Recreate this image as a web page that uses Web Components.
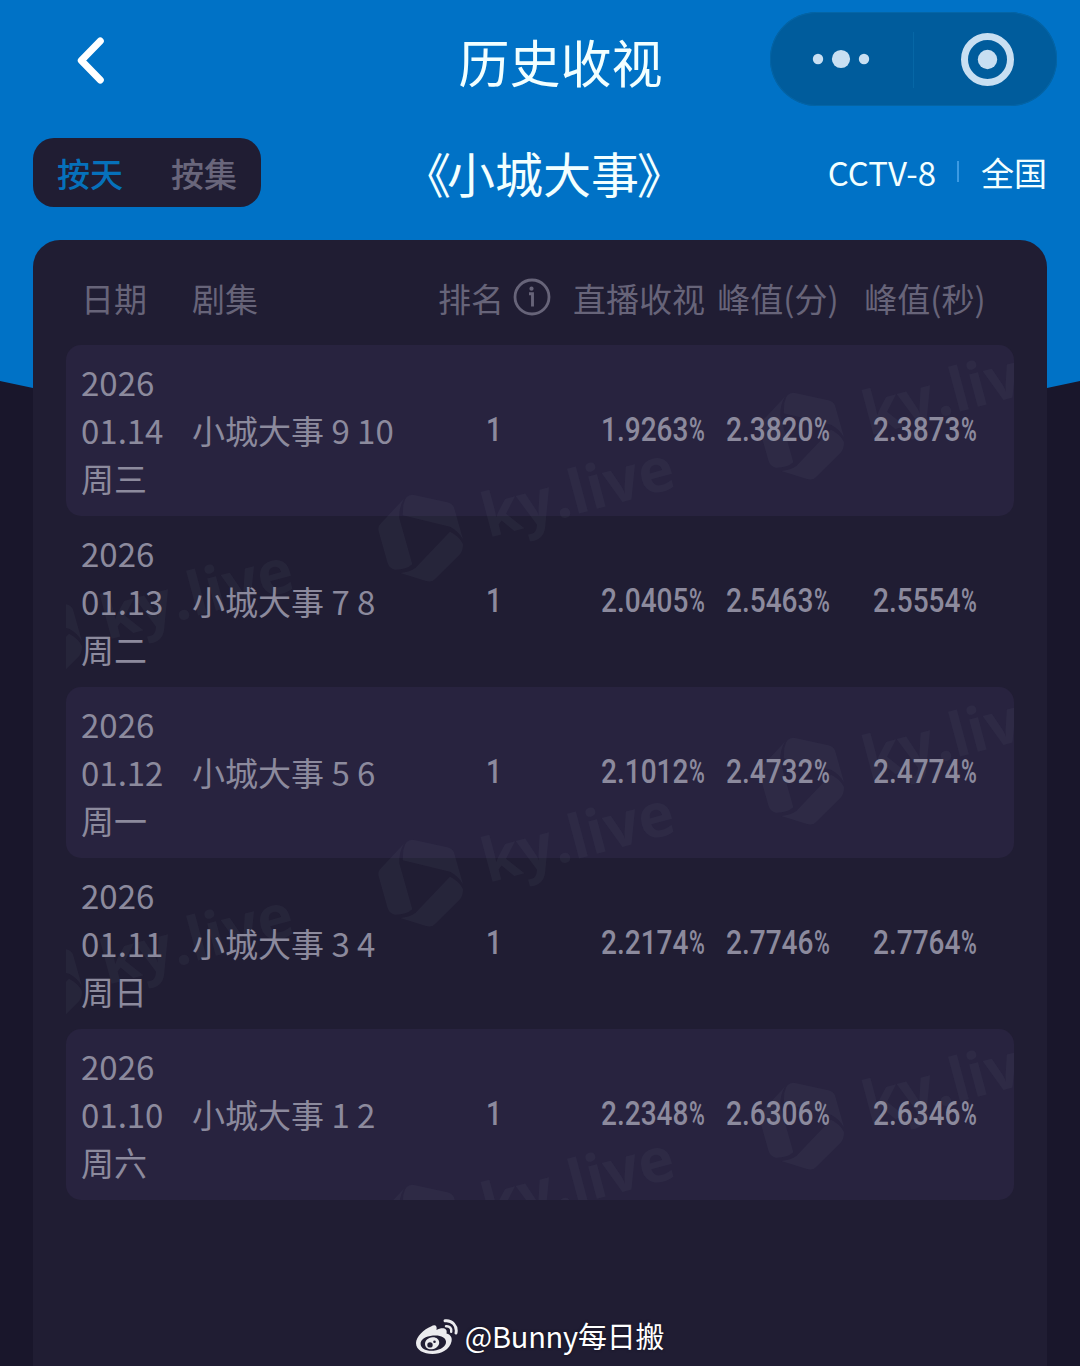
<!DOCTYPE html>
<html lang="zh-CN">
<head>
<meta charset="utf-8">
<title>历史收视</title>
<style>
html,body{margin:0;padding:0}
body{width:1080px;height:1366px;overflow:hidden;background:#19162b;font-family:"Noto Sans CJK SC",sans-serif;font-size:33px}
.open{letter-spacing:-4px}
.close{margin-left:-2px}
</style>
</head>
<body>
<ratings-page>
  <nav-bar slot="nav">历史收视</nav-bar>
  <filter-bar slot="filter" channel="CCTV-8" region="全国"><span class="open">《</span>小城大事<span class="close">》</span></filter-bar>
  <ratings-table>
    <ratings-row year="2026" day="01.14" week="周三" rank="1" live="1.9263" minute="2.3820" second="2.3873">小城大事 9 10</ratings-row>
    <ratings-row year="2026" day="01.13" week="周二" rank="1" live="2.0405" minute="2.5463" second="2.5554">小城大事 7 8</ratings-row>
    <ratings-row year="2026" day="01.12" week="周一" rank="1" live="2.1012" minute="2.4732" second="2.4774">小城大事 5 6</ratings-row>
    <ratings-row year="2026" day="01.11" week="周日" rank="1" live="2.2174" minute="2.7746" second="2.7764">小城大事 3 4</ratings-row>
    <ratings-row year="2026" day="01.10" week="周六" rank="1" live="2.2348" minute="2.6306" second="2.6346">小城大事 1 2</ratings-row>
  </ratings-table>
  <author-credit slot="credit">@Bunny每日搬</author-credit>
</ratings-page>
<script>
const define = (name, render) => customElements.define(name, class extends HTMLElement {
  constructor() {
    super();
    this.attachShadow({ mode: 'open' });
  }
  connectedCallback() {
    this.shadowRoot.innerHTML = render(this);
  }
});

define('ratings-page', () => `
<style>
:host{display:grid;width:1080px;height:1366px;grid-template:1fr / 1fr;background:#19162b}
.blue{grid-area:1/1;height:388px;background:#0072c6;clip-path:polygon(0 0,100% 0,100% 381px,1047px 388px,33px 388px,0 381px)}
.col{grid-area:1/1;display:flex;flex-direction:column;position:relative}
.panel{flex:1;margin:0 33px;background:#201d33;border-radius:27px 27px 0 0;display:flex;flex-direction:column;justify-content:space-between}
</style>
<div class="blue"></div>
<div class="col">
  <slot name="nav"></slot>
  <slot name="filter"></slot>
  <div class="panel"><slot></slot><slot name="credit"></slot></div>
</div>`);

define('nav-bar', () => `
<style>
:host{display:grid;grid-template-columns:1fr auto 1fr;height:120px;box-sizing:border-box;align-items:center;padding:0 23px 2px 64px;color:#f2ffff}
.back{display:block;width:54px;height:60px;margin-top:4px}
.title{font-size:51px;line-height:60px;padding-top:4px}
capsule-menu{justify-self:end}
</style>
<svg class="back" viewBox="64 31 54 60" fill="none" stroke="#fff" stroke-width="7" stroke-linecap="round" stroke-linejoin="round"><path d="M100.3 41 81.3 60.5 100.3 80"/></svg>
<div class="title"><slot></slot></div>
<capsule-menu></capsule-menu>`);

define('capsule-menu', () => `
<style>
:host{display:flex;width:287px;height:94px;border-radius:47px;background:#005c9c;box-shadow:inset 0 0 0 1px #0465a6}
svg{display:block}
</style>
<svg width="287" height="94" viewBox="770 12 287 94">
  <g fill="#c8dff2"><circle cx="818" cy="59" r="5.2"/><circle cx="841" cy="59" r="9.1"/><circle cx="864" cy="59" r="5.2"/><circle cx="987.5" cy="59.5" r="9.7"/></g>
  <path d="M913.5 32V88" stroke="#0667a6"/>
  <circle cx="987.5" cy="59.5" r="23" fill="none" stroke="#c8dff2" stroke-width="7"/>
</svg>`);

define('filter-bar', el => `
<style>
:host{display:grid;grid-template-columns:1fr auto 1fr;height:120px;padding:18px 33px 33px;box-sizing:border-box;color:#f2ffff}
.tabs{display:flex;justify-content:space-between;align-items:center;width:228px;height:69px;box-sizing:border-box;padding:0 24px;border-radius:21px;background:#201d33;font-weight:500;color:#69667b;line-height:48px}
.on{color:#0671bb}
.name{font-size:48px;line-height:69px;padding-left:8px}
.scope{display:flex;justify-content:flex-end;align-items:center;height:67px;line-height:48px}
i{width:2px;height:21px;background:#3b9ae3;margin:0 22px 0 21px}
</style>
<div class="tabs"><span class="on">按天</span><span>按集</span></div>
<div class="name"><slot></slot></div>
<div class="scope"><span>${el.getAttribute('channel')}</span><i></i><span>${el.getAttribute('region')}</span></div>`);

const columns = 'grid-template-columns:111px 246px 112px 155px 146px 148px;padding-left:15px;';

define('ratings-table', () => `
<style>
:host{display:block;position:relative;margin:0 33px}
.head{display:grid;${columns}height:105px;align-items:center;color:#676479;line-height:48px;white-space:nowrap}
.head>*{padding-top:10px}
.rank{display:flex;align-items:center;justify-content:space-between}
.rank svg{width:38px;height:38px;margin:-1px -1px 0 0}
.r{text-align:right}.c{text-align:center}
water-mark{position:absolute;left:0;top:105px}
</style>
<div class="head"><span class="date">日期</span><span>剧集</span>
<span class="rank">排名<svg viewBox="0 0 38 38" fill="none" stroke="#676479"><circle cx="19" cy="19" r="17" stroke-width="2.8"/><circle cx="18.500" cy="10.7" r="2.100" fill="#676479" stroke="none"/><path d="M16 15.700H19.500V28.4" stroke-width="2.9"/></svg></span>
<span class="r">直播收视</span><span class="c">峰值(分)</span><span class="c">峰值(秒)</span></div>
<slot></slot>
<water-mark></water-mark>`);

define('ratings-row', el => {
  const a = n => el.getAttribute(n);
  return `
<style>
:host{display:grid;${columns}height:171px;align-items:center;border-radius:15px;color:#8c8a9d;line-height:48px;white-space:nowrap}
:host(:nth-child(odd)){background:#28233f}
.date{display:flex;flex-direction:column}
.date,.ep{padding-bottom:1px}
.rank{display:flex;justify-content:center}
.r{display:flex;justify-content:flex-end}
.c{display:flex;justify-content:center}
din-number{padding-bottom:2px}
</style>
<div class="date"><span>${a('year')}</span><span>${a('day')}</span><span>${a('week')}</span></div>
<div class="ep"><slot></slot></div>
<din-number class="rank">${a('rank')}</din-number>
<din-number class="r" percent>${a('live')}</din-number>
<din-number class="c" percent>${a('minute')}</din-number>
<din-number class="c" percent>${a('second')}</din-number>`;
});

define('din-number', el => `
<style>
:host{display:flex;font:500 33px/48px Roboto,sans-serif}
.d{display:block;transform:scaleX(.85);transform-origin:0 50%;${el.hasAttribute('percent') ? 'width:88px' : 'width:16px'}}
.p{display:block;width:16px;font-weight:600;transform:scaleX(.65);transform-origin:0 50%}
</style>
<span class="d"><slot></slot></span>${el.hasAttribute('percent') ? '<span class="p">%</span>' : ''}`);

define('water-mark', () => {
  const spots = [[0,0],[381,-102],[-381,102],[0,345],[381,243],[-381,447],[0,690],[381,588]];
  const mark = ([x, y]) => `
  <g transform="translate(${x} ${y})">
    <g transform="translate(360 430) scale(.3333)">
      <path d="M130 225Q137 190 162 195L262 217Q280 221 284 239L309 328Q296 303 270 290L128 256Z"/>
      <path d="M132 206 63 280Q52 290 56 304L83 400Q89 416 104 419Q138 420 157 403L118 265Q116 232 132 206Z"/>
      <path d="M270 305Q298 319 309 342Q309 362 300 373L226 446Q216 458 198 453L121 429Q150 426 167 413Z"/>
    </g>
    <text transform="translate(488 538) rotate(-15)" textLength="197" lengthAdjust="spacingAndGlyphs">ky.live</text>
  </g>`;
  return `
<style>
:host{display:block;width:948px;height:855px;pointer-events:none}
svg{display:block;overflow:hidden}
text{font:700 61px "Open Sans","Noto Sans",sans-serif}
</style>
<svg width="948" height="855" viewBox="66 345 948 855" fill="#8c9ca0" fill-opacity=".065">${spots.map(mark).join('')}</svg>`;
});

define('author-credit', () => `
<style>
:host{display:flex;justify-content:center;align-items:center;gap:7px;height:58px;color:#fff;font:400 29px/44px "Noto Sans CJK SC",sans-serif;text-shadow:0 0 3px #0008}
svg{display:block;width:42px;height:36px}
.t{white-space:nowrap;letter-spacing:-.25px;padding-bottom:4px}
</style>
<svg viewBox="0 0 42 36">
  <path fill="#ebebee" fill-rule="evenodd" d="M15 7.5C18.500 5 21.500 6 20.500 11C25 8.500 32 8 30.500 14.500C34.500 15.500 36.500 18.500 35.500 22.500C34 30.500 25 35 16.500 35C7.500 35 0 31 0 24C0 18 8 10 15 7.500ZM17 16.500C9.500 17.200 4.500 20.500 4.600 25C4.800 29.500 10.200 32.400 17.600 31.700C25 31 30.400 27.200 30 22.600C29.600 18.200 24.500 15.800 17 16.500Z"/>
  <path fill="#ebebee" fill-rule="evenodd" d="M16.500 18.200C12 18.500 8.800 21.600 9 25.200C9.200 28.600 12.200 30.600 16 30.200C20.300 29.800 23.400 26.800 23.200 23.300C23 20.100 20.200 17.900 16.500 18.200ZM14 23.200A2.700 2.700 0 1 0 14 28.600A2.700 2.700 0 1 0 14 23.200ZM18.500 21.500A1.300 1.300 0 1 0 18.500 24.100A1.300 1.300 0 1 0 18.500 21.500Z"/>
  <g fill="none" stroke="#ebebee" stroke-linecap="round"><path d="M29 1.800C36 .8 41.500 7 40 14" stroke-width="2.900"/><path d="M30 7.200C33.500 6.800 36 9.500 35.200 12.800" stroke-width="2.500"/></g>
</svg>
<span class="t"><slot></slot></span>`);
</script>
</body>
</html>
